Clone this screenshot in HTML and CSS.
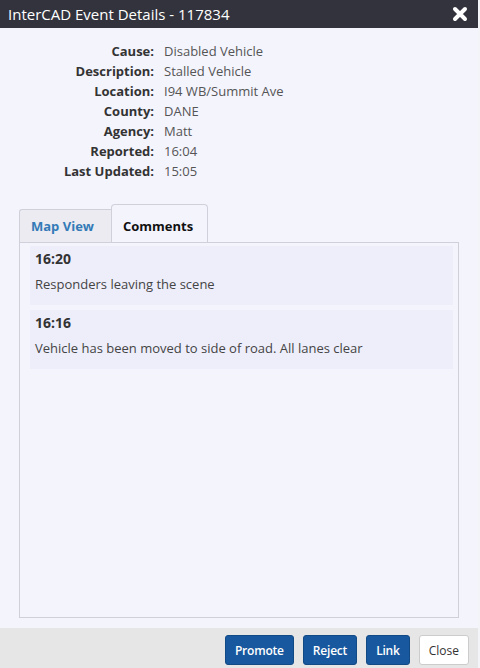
FILE: index.html
```html
<!DOCTYPE html>
<html lang="en">
<head>
    <meta charset="UTF-8">
    <meta name="viewport" content="width=device-width, initial-scale=1.0">
    <title>InterCAD Event Details</title>
    <link rel="stylesheet" href="styles.css">
</head>
<body>
    <div class="dialog">
        <header class="titlebar">
            <h1>InterCAD Event Details - 117834</h1>
            <button class="close-x" type="button" aria-label="Close">
                <svg width="16" height="16" viewBox="0 0 16 16">
                    <path d="M3 3 L13 13 M13 3 L3 13" stroke="#fff" stroke-width="4" stroke-linecap="round"/>
                </svg>
            </button>
        </header>

        <dl class="details">
            <dt>Cause:</dt><dd>Disabled Vehicle</dd>
            <dt>Description:</dt><dd>Stalled Vehicle</dd>
            <dt>Location:</dt><dd>I94 WB/Summit Ave</dd>
            <dt>County:</dt><dd>DANE</dd>
            <dt>Agency:</dt><dd>Matt</dd>
            <dt>Reported:</dt><dd>16:04</dd>
            <dt>Last Updated:</dt><dd>15:05</dd>
        </dl>

        <div class="tabs">
            <ul class="tab-list">
                <li class="tab"><a href="#">Map View</a></li>
                <li class="tab active"><a href="#">Comments</a></li>
            </ul>
            <div class="tab-panel">
                <div class="comment">
                    <div class="comment-time">16:20</div>
                    <div class="comment-text">Responders leaving the scene</div>
                </div>
                <div class="comment">
                    <div class="comment-time">16:16</div>
                    <div class="comment-text">Vehicle has been moved to side of road. All lanes clear</div>
                </div>
            </div>
        </div>

        <footer class="actions">
            <button class="btn btn-primary" type="button">Promote</button>
            <button class="btn btn-primary" type="button">Reject</button>
            <button class="btn btn-primary" type="button">Link</button>
            <button class="btn btn-default" type="button">Close</button>
        </footer>
    </div>
</body>
</html>
```

FILE: styles.css
```css
body {
    margin: 0;
    padding: 0;
    background-color: #f2f4f8;
    font-family: "Open Sans", "Noto Sans", sans-serif;
    font-size: 13px;
    color: #333;
}

.dialog {
    width: 478px;
    height: 668px;
    display: flex;
    flex-direction: column;
    background-color: #f4f4fd;
}

.titlebar {
    height: 28px;
    background-color: #33333d;
    display: flex;
    align-items: center;
    justify-content: space-between;
    padding: 0 10px 0 8px;
}

.titlebar h1 {
    margin: 0;
    font-size: 15px;
    font-weight: normal;
    color: #fff;
}

.close-x {
    background: none;
    border: none;
    padding: 0;
    display: flex;
}

.details {
    display: grid;
    grid-template-columns: 146px auto;
    column-gap: 10px;
    margin: 13px 0 0 8px;
    line-height: 20px;
}

.details dt {
    text-align: right;
    font-weight: bold;
}

.details dd {
    margin: 0;
    color: #555;
}

.tabs {
    margin: 23px 19px 0 19px;
    flex: 1;
    display: flex;
    flex-direction: column;
}

.tab-list {
    list-style: none;
    margin: 0;
    padding: 0;
    display: flex;
    align-items: flex-end;
    height: 38px;
}

.tab {
    margin-bottom: -1px;
}

.tab a {
    display: block;
    text-decoration: none;
    font-weight: bold;
    border: 1px solid #cfd0da;
    border-bottom: none;
}

.tab:first-child a {
    width: 80px;
    height: 33px;
    line-height: 33px;
    padding-left: 11px;
    background-color: #ebebf1;
    color: #337ab7;
    border-right: none;
    border-radius: 3px 0 0 0;
}

.tab.active a {
    width: 84px;
    height: 38px;
    line-height: 42px;
    padding-left: 11px;
    background-color: #f4f4fd;
    color: #111;
    border-radius: 4px 4px 0 0;
}

.tab-panel {
    flex: 1;
    border: 1px solid #cfd0da;
    padding: 3px 5px 0 10px;
    margin-bottom: 10px;
}

.comment {
    background-color: #eeeefb;
    padding: 3px 5px 11px 5px;
    margin-bottom: 5px;
}

.comment-time {
    font-weight: bold;
    font-size: 14px;
    line-height: 20px;
    color: #333;
}

.comment-text {
    margin-top: 5px;
    line-height: 20px;
    color: #444;
}

.actions {
    height: 40px;
    background-color: #e6e6e6;
    display: flex;
    justify-content: flex-end;
    align-items: flex-start;
    gap: 9px;
    padding: 7px 9px 0 0;
    box-sizing: border-box;
}

.btn {
    height: 30px;
    padding: 0 9px;
    font-family: inherit;
    font-size: 12px;
    border-radius: 3px;
    cursor: pointer;
}

.btn-primary {
    background-color: #17589e;
    border: 1px solid #124a86;
    color: #fff;
    font-weight: 600;
    letter-spacing: -0.2px;
}

.btn-default {
    background-color: #fff;
    border: 1px solid #ccc;
    color: #333;
}
```
